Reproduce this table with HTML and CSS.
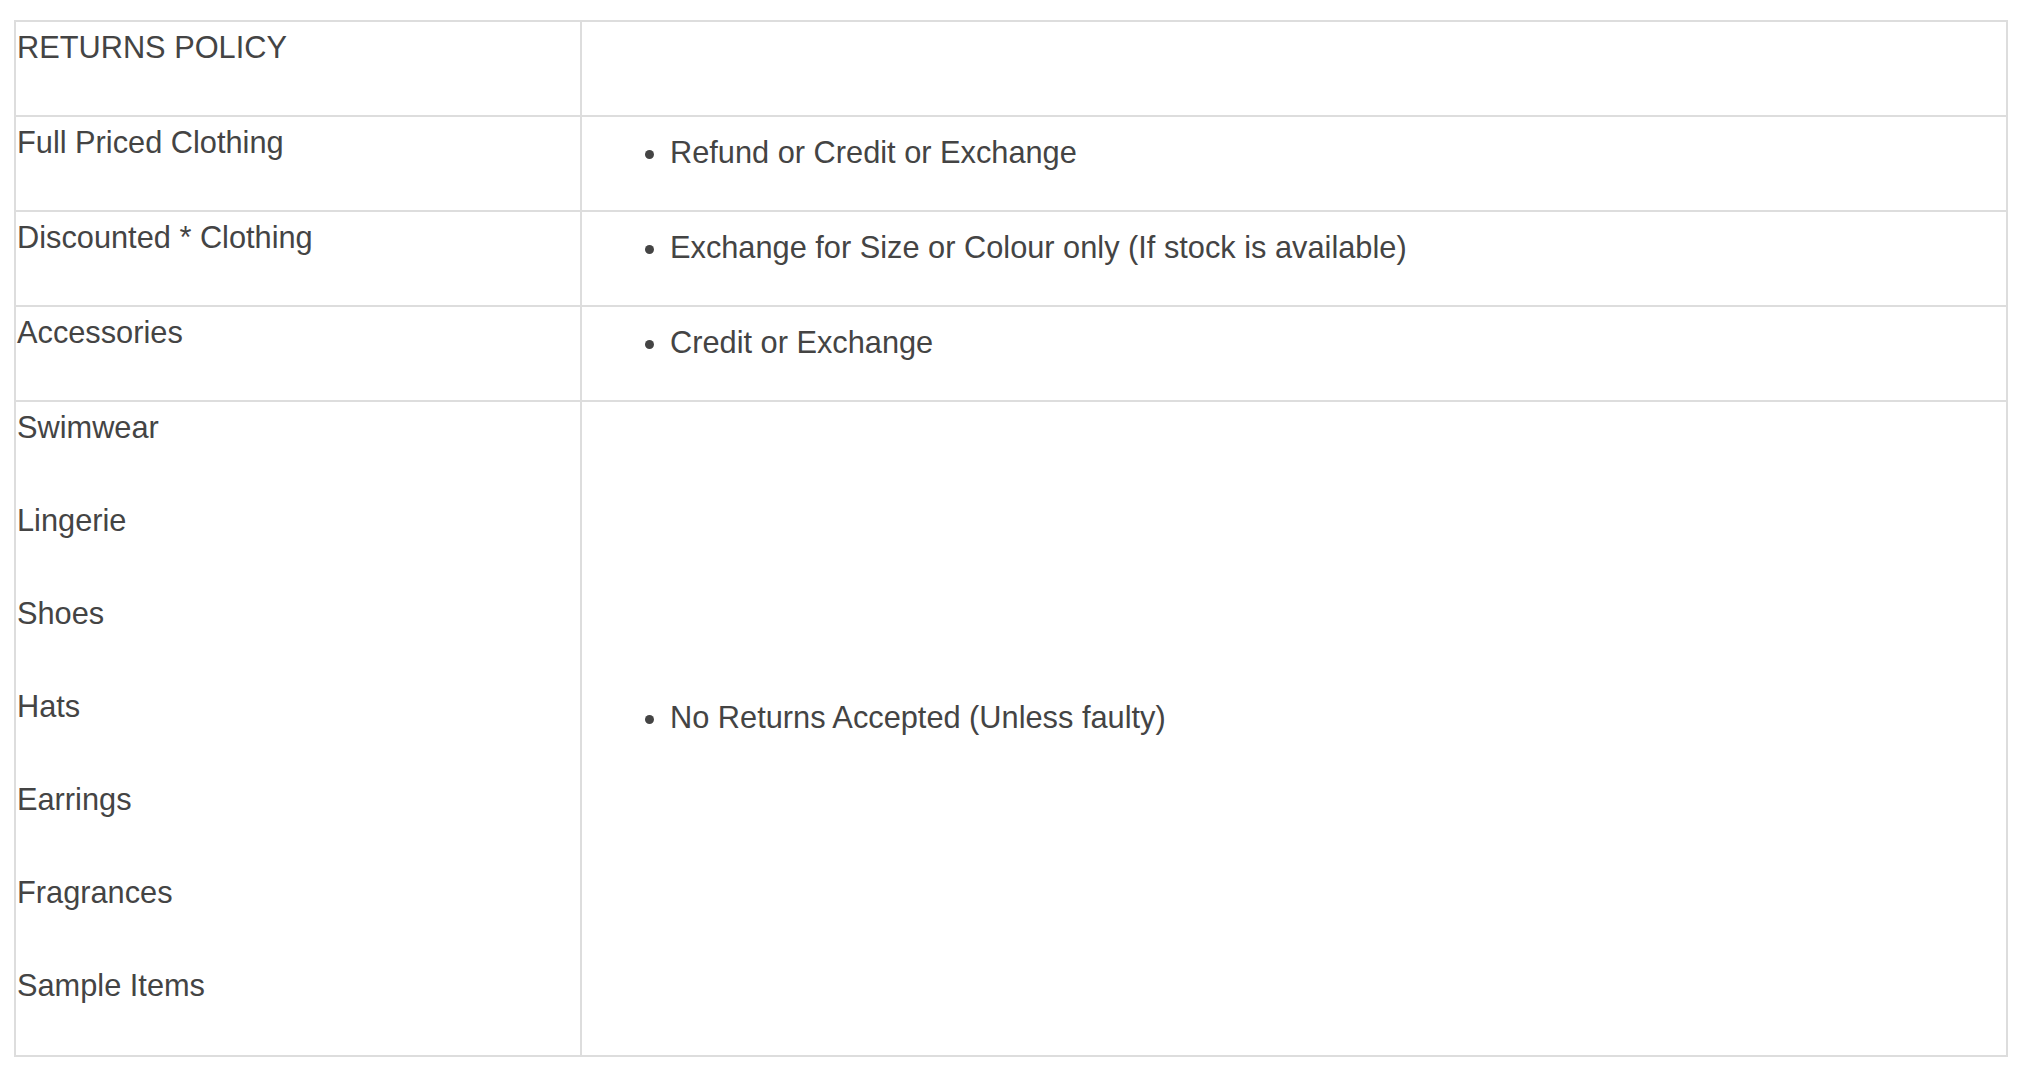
FILE: index.html
```html
<!DOCTYPE html>
<html lang="en">
<head>
<meta charset="utf-8">
<title>Returns Policy</title>
<link rel="stylesheet" href="styles.css">
</head>
<body>
<table class="policy">
  <colgroup>
    <col class="col-label">
    <col class="col-rule">
  </colgroup>
  <tbody>
    <tr>
      <td class="label"><p>RETURNS POLICY</p></td>
      <td class="rule"></td>
    </tr>
    <tr>
      <td class="label"><p>Full Priced Clothing</p></td>
      <td class="rule"><ul><li>Refund or Credit or Exchange</li></ul></td>
    </tr>
    <tr>
      <td class="label"><p>Discounted * Clothing</p></td>
      <td class="rule"><ul><li>Exchange for Size or Colour only (If stock is available)</li></ul></td>
    </tr>
    <tr>
      <td class="label"><p>Accessories</p></td>
      <td class="rule"><ul><li>Credit or Exchange</li></ul></td>
    </tr>
    <tr>
      <td class="label label-list">
        <p>Swimwear</p>
        <p>Lingerie</p>
        <p>Shoes</p>
        <p>Hats</p>
        <p>Earrings</p>
        <p>Fragrances</p>
        <p>Sample Items</p>
      </td>
      <td class="rule"><ul><li>No Returns Accepted (Unless faulty)</li></ul></td>
    </tr>
  </tbody>
</table>
</body>
</html>
```

FILE: styles.css
```css
html, body {
  margin: 0;
  padding: 0;
  background: #ffffff;
}

body {
  font-family: "Liberation Sans", Arial, Helvetica, sans-serif;
  font-size: 30.75px;
  color: #444444;
}

.policy {
  margin: 20px 0 0 14px;
  width: 1994px;
  border-collapse: collapse;
  table-layout: fixed;
}

.col-label {
  width: 566px;
}

.policy td {
  border: 2px solid #dddddd;
  padding: 0;
}

.label {
  vertical-align: top;
  padding: 0 0 0 1px !important;
}

.label-list {
  padding-bottom: 2px !important;
}

.label p {
  margin: 0 0 42px;
  line-height: 51px;
}

.rule {
  vertical-align: middle;
  padding-left: 48px !important;
}

.rule ul {
  margin: 0 0 22px;
  padding-left: 40px;
  list-style: disc;
}

.rule li {
  line-height: 45px;
}
```
